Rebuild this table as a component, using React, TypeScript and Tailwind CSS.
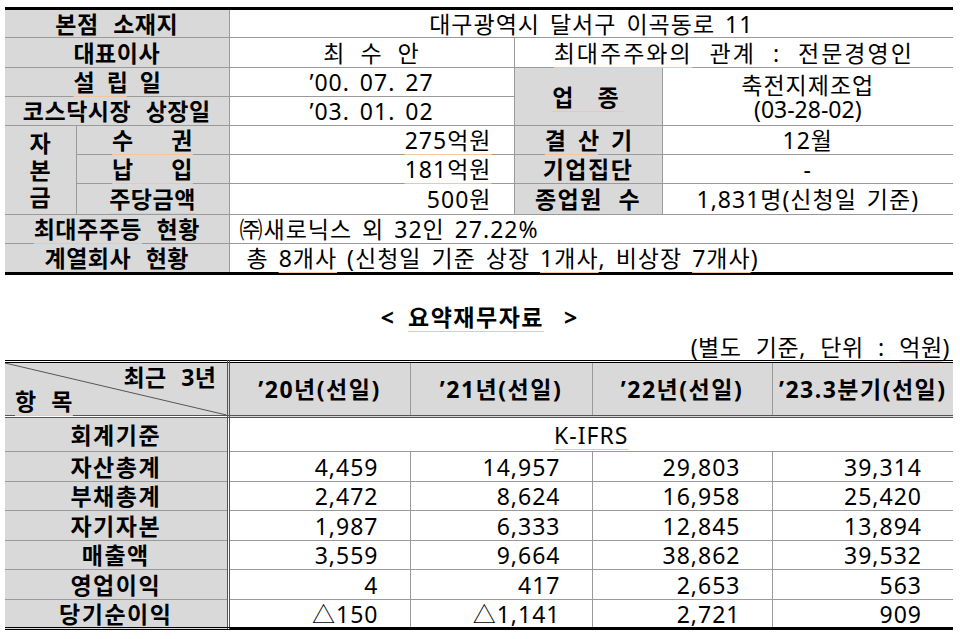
import React from 'react'

const font = { fontFamily: '"Noto Sans", "Noto Sans CJK KR", sans-serif' }

// faint orange spell-check underline seen in the source document
function U({ children }: { children: React.ReactNode }) {
  return (
    <span className="underline decoration-[#f3c6a2] decoration-1 underline-offset-[5px]">
      {children}
    </span>
  )
}

const cell = 'border border-[#9a9a9a] p-0 leading-[24px]'
const head = `${cell} bg-[#d9d9d9] font-bold text-center text-black tracking-[0.5px] [word-spacing:8px]`
const val = `${cell} font-normal text-black tracking-[1px] [word-spacing:3px]`

function CompanyTable() {
  return (
    <table className="w-[948px] table-fixed border-collapse text-[23px]">
      <colgroup>
        <col className="w-[71px]" />
        <col className="w-[153px]" />
        <col className="w-[285px]" />
        <col className="w-[148px]" />
        <col className="w-[291px]" />
      </colgroup>
      <tbody>
        <tr className="h-[29px]">
          <th colSpan={2} className={`${head} border-l-0 border-t-[3px] border-t-black`}>
            본점 소재지
          </th>
          <td colSpan={3} className={`${val} border-r-0 border-t-[3px] border-t-black text-center`}>
            대구광역시 달서구 이곡동로 11
          </td>
        </tr>
        <tr className="h-[30px]">
          <th colSpan={2} className={`${head} border-l-0`}>대표이사</th>
          <td className={`${val} text-center [word-spacing:8px]`}>최 수 안</td>
          <td
            colSpan={2}
            className={`${val} border-r-0 text-center tracking-[2px] [word-spacing:9px]`}
          >
            <U>최대주주와의</U> 관계 : 전문경영인
          </td>
        </tr>
        <tr className="h-[29px]">
          <th colSpan={2} className={`${head} border-l-0`}>
            <span className="tracking-[-1px]">
              <U>설 립</U> 일
            </span>
          </th>
          <td className={`${val} text-center tracking-[0px] [word-spacing:0px]`}>’00. 07. 27</td>
          <th rowSpan={2} className={head}>
            <span className="tracking-[5px]">
              <U>업 종</U>
            </span>
          </th>
          <td rowSpan={2} className={`${val} border-r-0 text-center`}>
            <span className="block">축전지제조업</span>
            <span className="block tracking-[0px]">(03-28-02)</span>
          </td>
        </tr>
        <tr className="h-[29px]">
          <th colSpan={2} className={`${head} border-l-0`}>코스닥시장 상장일</th>
          <td className={`${val} text-center tracking-[0px] [word-spacing:0px]`}>’03. 01. 02</td>
        </tr>
        <tr className="h-[29px]">
          <th rowSpan={3} className={`${head} border-l-0`}>
            <span className="flex flex-col items-center gap-[3px]">
              <span>자</span>
              <span>본</span>
              <span>금</span>
            </span>
          </th>
          <th className={head}>
            <U>
              <span className="tracking-[12px]">수 </span>권
            </U>
          </th>
          <td className={`${val} pr-[22px] text-right tracking-[0.5px]`}>
            <U>275억원</U>
          </td>
          <th className={head}>
            <span className="tracking-[-1px]">
              <U>결 산</U> 기
            </span>
          </th>
          <td className={`${val} border-r-0 text-center`}>12월</td>
        </tr>
        <tr className="h-[29px]">
          <th className={head}>
            <U>
              <span className="tracking-[12px]">납 </span>입
            </U>
          </th>
          <td className={`${val} pr-[22px] text-right tracking-[0.5px]`}>
            <U>181억원</U>
          </td>
          <th className={`${head} tracking-[1.5px]`}>기업집단</th>
          <td className={`${val} border-r-0 text-center`}>-</td>
        </tr>
        <tr className="h-[31px]">
          <th className={head}>
            <U>주당금액</U>
          </th>
          <td className={`${val} pr-[22px] text-right tracking-[0.5px]`}>500원</td>
          <th className={head}>
            <span className="tracking-[1.5px]">종업원 수</span>
          </th>
          <td className={`${val} border-r-0 text-center tracking-[0.5px]`}>
            1,831명(신청일 기준)
          </td>
        </tr>
        <tr className="h-[29px]">
          <th colSpan={2} className={`${head} border-l-0`}>
            <U>최대주주등</U> 현황
          </th>
          <td colSpan={3} className={`${val} border-r-0 pl-[10px] text-left`}>
            ㈜새로닉스 외 32인 27.22%
          </td>
        </tr>
        <tr className="h-[30px]">
          <th colSpan={2} className={`${head} border-l-0 border-b-[3px] border-b-black`}>
            계열회사 현황
          </th>
          <td
            colSpan={3}
            className={`${val} border-r-0 border-b-[3px] border-b-black pl-[17px] text-left`}
          >
            총 <U>8개사</U> (신청일 기준 상장 <U>1개사</U>, 비상장 <U>7개사</U>)
          </td>
        </tr>
      </tbody>
    </table>
  )
}

const finance = [
  { label: '자산총계', values: ['4,459', '14,957', '29,803', '39,314'], h: 'h-[30px]' },
  { label: '부채총계', values: ['2,472', '8,624', '16,958', '25,420'], h: 'h-[29px]' },
  { label: '자기자본', values: ['1,987', '6,333', '12,845', '13,894'], h: 'h-[30px]' },
  { label: '매출액', values: ['3,559', '9,664', '38,862', '39,532'], h: 'h-[29px]' },
  { label: '영업이익', values: ['4', '417', '2,653', '563'], h: 'h-[30px]' },
  { label: '당기순이익', values: ['△150', '△1,141', '2,721', '909'], h: 'h-[29px]' },
]

const years = ['’20년(선일)', '’21년(선일)', '’22년(선일)', '’23.3분기(선일)']

function FinanceTable() {
  const labelCell = `${head} tracking-[1.5px] border-l-0 border-r-[3px] border-r-[#555] border-double`
  return (
    <table className="w-[948px] table-fixed border-collapse text-[23px]">
      <colgroup>
        <col className="w-[223px]" />
        <col className="w-[182px]" />
        <col className="w-[182px]" />
        <col className="w-[180px]" />
        <col className="w-[181px]" />
      </colgroup>
      <thead>
        <tr className="h-[55px]">
          <th
            className={`${cell} relative border-l-0 border-t-[3px] border-t-black border-r-[3px] border-r-[#555] border-b-[3px] border-b-[#555] border-double bg-[#d9d9d9] font-bold`}
          >
            <svg
              className="absolute inset-0 h-full w-full"
              viewBox="0 0 100 100"
              preserveAspectRatio="none"
            >
              <line
                x1="0"
                y1="0"
                x2="100"
                y2="100"
                stroke="#555"
                strokeWidth="1"
                vectorEffect="non-scaling-stroke"
              />
            </svg>
            <div className="relative flex flex-col tracking-[0.5px] [word-spacing:8px]">
              <span className="pr-[10px] text-right">최근 3년</span>
              <span className="pl-[10px] text-left">
                <U>항 목</U>
              </span>
            </div>
          </th>
          {years.map((y, i) => (
            <th
              key={y}
              className={`${cell} border-t-[3px] border-t-black border-b-[3px] border-b-[#555] border-double bg-[#d9d9d9] text-center font-bold tracking-[1.5px] ${i === 3 ? 'border-r-0' : ''}`}
            >
              {y}
            </th>
          ))}
        </tr>
      </thead>
      <tbody>
        <tr className="h-[35px]">
          <th className={labelCell}>회계기준</th>
          <td colSpan={4} className={`${val} border-r-0 text-center tracking-[0.5px]`}>
            <U>K-IFRS</U>
          </td>
        </tr>
        {finance.map((row, r) => {
          const last = r === finance.length - 1
          return (
            <tr key={row.label} className={row.h}>
              <th className={`${labelCell} ${last ? 'border-b-[3px] border-b-black' : ''}`}>
                {row.label}
              </th>
              {row.values.map((v, i) => (
                <td
                  key={i}
                  className={`${val} pr-[31px] text-right tracking-[0px] ${i === 3 ? 'border-r-0' : ''} ${last ? 'border-b-[3px] border-b-black' : ''}`}
                >
                  {v}
                </td>
              ))}
            </tr>
          )
        })}
      </tbody>
    </table>
  )
}

export default function App() {
  return (
    <div className="min-h-[639px] w-[960px] bg-white pl-[5px] pt-[7px] text-black" style={font}>
      <CompanyTable />
      <div className="mt-[30px] flex w-[948px] items-center justify-center text-[23px] font-bold leading-[24px]">
        <span>&lt;</span>
        <span className="ml-[14px] tracking-[1.5px]">
          <U>요약재무자료</U>
        </span>
        <span className="ml-[20px]">&gt;</span>
      </div>
      <div className="mt-[6px] w-[945px] text-right text-[23px] leading-[24px] tracking-[0.5px] [word-spacing:8px]">
        (별도 기준, 단위 : <U>억원</U>)
      </div>
      <div className="mt-[1px]">
        <FinanceTable />
      </div>
    </div>
  )
}
